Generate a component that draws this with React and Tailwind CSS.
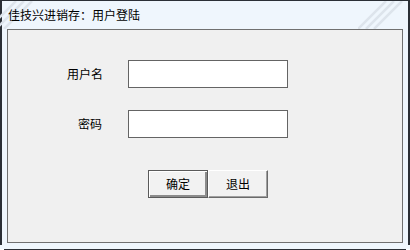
import React from 'react';

const Stripes = ({ className }) => (
    <svg className={className} width="48" height="28" viewBox="0 0 48 28">
        <line x1="0" y1="28" x2="28" y2="0" stroke="#dde4ec" strokeWidth="2.5" />
        <line x1="8" y1="28" x2="36" y2="0" stroke="#dde4ec" strokeWidth="2.5" />
        <line x1="16" y1="28" x2="44" y2="0" stroke="#dde4ec" strokeWidth="2.5" />
    </svg>
);

const App = () => {
    const font = { fontFamily: '"Noto Sans CJK SC", "Noto Sans", sans-serif' };

    return (
        <div className="w-[410px] h-[250px] bg-white" style={font}>
            <div className="relative h-[245px] bg-[#eff6fd] border-t border-l-2 border-r-2 border-[#2b2f36] flex flex-col">
                <Stripes className="absolute left-[-14px] top-0" />
                <Stripes className="absolute right-[2px] top-0" />
                <div className="relative h-[28px] flex items-center pl-[6px] text-[12px] text-black leading-none">
                    佳技兴进销存：用户登陆
                </div>
                <div className="ml-[5px] mr-[5px] h-[214px] border border-[#707070] bg-[#f0f0f0] flex flex-col pt-[30px] text-[12px] text-black">
                    <div className="flex items-center h-[28px]">
                        <div className="w-[120px] pl-[59px] leading-none">用户名</div>
                        <div className="w-[160px] h-[28px] border border-[#646464] bg-white" />
                    </div>
                    <div className="flex items-center h-[28px] mt-[22px]">
                        <div className="w-[120px] pl-[70px] leading-none">密码</div>
                        <div className="w-[160px] h-[28px] border border-[#646464] bg-white" />
                    </div>
                    <div className="flex mt-[32px] pl-[140px]">
                        <button className="w-[60px] h-[28px] border border-[#5a5a5a] bg-[#f2f2f2] shadow-[inset_1px_1px_0_#ffffff,inset_-2px_-2px_0_#8c8c8c] text-[12px] leading-none">
                            确定
                        </button>
                        <button className="w-[60px] h-[28px] border border-t-[#ffffff] border-l-[#ffffff] border-r-[#6a6a6a] border-b-[#6a6a6a] bg-[#f2f2f2] shadow-[inset_-1px_-1px_0_#a0a0a0] text-[12px] leading-none">
                            退出
                        </button>
                    </div>
                </div>
            </div>
            <div className="h-[4px] bg-[#f0f7fd]" />
            <div className="h-[1px] mx-[4px] bg-[#2b2f36]" />
        </div>
    );
};

export default App;
